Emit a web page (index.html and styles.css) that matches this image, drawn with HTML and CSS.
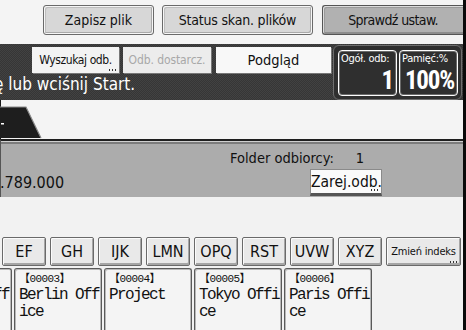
FILE: index.html
```html
<!DOCTYPE html>
<html lang="pl">
<head>
<meta charset="utf-8">
<title>Skaner</title>
<link rel="stylesheet" href="styles.css">
</head>
<body>
<div class="screen">
  <header class="topbar">
    <button class="btn btn-save">Zapisz plik</button>
    <button class="btn btn-status">Status skan. plików</button>
    <button class="btn btn-dark">Sprawdź ustaw.</button>
  </header>

  <section class="band">
    <div class="band-main">
      <div class="tabs">
        <div class="tab tab-search">Wyszukaj odb.<span class="more"></span></div>
        <div class="tab tab-disabled">Odb. dostarcz.</div>
        <div class="tab tab-preview">Podgląd</div>
      </div>
      <div class="msg">ę lub wciśnij Start.</div>
    </div>
    <div class="counters">
      <div class="counter"><span class="lbl">Ogół. odb:</span><span class="num">1</span></div>
      <div class="counter"><span class="lbl">Pamięć:%</span><span class="num">100%</span></div>
    </div>
  </section>

  <section class="tabstrip">
    <svg class="lefttab" width="44" height="33" viewBox="0 0 44 33">
      <polygon points="0,1 26,1 41,32 0,32" fill="#1e1e1e"/>
      <polyline points="0,1 26,1 41,32" fill="none" stroke="#8a8a8a" stroke-width="1.2"/>
      <rect x="1" y="17" width="3" height="1.5" fill="#ffffff"/>
    </svg>
  </section>

  <section class="info">
    <div class="info-row1"><span class="folder-lbl">Folder odbiorcy:</span><span class="folder-val">1</span></div>
    <div class="info-row2"><span class="addr">.789.000</span><button class="btn-white">Zarej.odb.<span class="more"></span></button></div>
  </section>

  <nav class="index">
    <button class="ix">EF</button>
    <button class="ix">GH</button>
    <button class="ix">IJK</button>
    <button class="ix">LMN</button>
    <button class="ix">OPQ</button>
    <button class="ix">RST</button>
    <button class="ix">UVW</button>
    <button class="ix">XYZ</button>
    <button class="ix ix-wide">Zmień indeks<span class="more"></span></button>
  </nav>

  <div class="cards">
    <div class="card card-partial"><span class="code">【00002】</span><span class="name">London Off<br>ice</span></div>
    <div class="card"><span class="code">【00003】</span><span class="name">Berlin Off<br>ice</span></div>
    <div class="card"><span class="code">【00004】</span><span class="name">Project</span></div>
    <div class="card"><span class="code">【00005】</span><span class="name">Tokyo Offi<br>ce</span></div>
    <div class="card"><span class="code">【00006】</span><span class="name">Paris Offi<br>ce</span></div>
  </div>
</div>
</body>
</html>
```

FILE: styles.css
```css
* { box-sizing: border-box; }
html, body { margin: 0; padding: 0; }
body {
  width: 466px;
  height: 330px;
  overflow: hidden;
  background: #f2f2f2;
  font-family: "DejaVu Sans Condensed", "DejaVu Sans", sans-serif;
  font-stretch: condensed;
  color: #111;
}
button { font: inherit; color: inherit; padding: 0; margin: 0; cursor: default; white-space: nowrap; }

.screen {
  width: 466px;
  height: 330px;
  border-right: 3px solid #0a0a0a;
  display: flex;
  flex-direction: column;
  overflow: hidden;
}

/* top bar */
.topbar {
  height: 44px;
  display: flex;
  align-items: flex-start;
  padding: 5px 0 0 43px;
  background: #f4f4f4;
}
.btn {
  height: 30px;
  border: 1px solid #6a6a6a;
  border-radius: 3px;
  background: #d7d7d7;
  box-shadow: inset 1px 1px 0 #f6f6f6, inset -1px -1px 0 #f6f6f6, inset 2px 2px 0 #bdbdbd, inset -2px -2px 0 #a9a9a9;
  font-size: 14px;
  line-height: 27px;
  text-align: center;
}
.btn-save { width: 111px; }
.btn-status { width: 151px; margin-left: 8px; letter-spacing: -0.2px; }
.btn-dark {
  width: 141px;
  margin-left: 9px;
  background: #b1b1b1;
  border-color: #555;
  border-radius: 3px 0 0 3px;
  border-right: none;
  letter-spacing: -0.6px;
  box-shadow: inset 1px 1px 0 #dcdcdc, inset 2px 2px 0 #9a9a9a, inset 0 -2px 0 #8d8d8d;
}

/* dark band */
.band {
  height: 56px;
  display: flex;
  background: repeating-conic-gradient(#363636 0 25%, #424242 0 50%) 0 0 / 2px 2px;
}
.band-main {
  width: 333px;
  display: flex;
  flex-direction: column;
}
.tabs {
  display: flex;
  align-items: flex-start;
  padding: 3px 0 0 32px;
  height: 29px;
}
.tab {
  position: relative;
  height: 26px;
  background: #f3f3f3;
  font-size: 12px;
  line-height: 26px;
  text-align: center;
  white-space: nowrap;
  box-shadow: 1px 1px 0 #777;
}
.tab-search { width: 87px; letter-spacing: -0.4px; }
.tab-disabled { width: 88px; margin-left: 4px; color: #a8a8a8; background: #ececec; letter-spacing: -0.1px; }
.tab-preview { width: 115px; margin-left: 5px; height: 26px; background: #f8f8f8; font-size: 14.5px; }
.more {
  position: absolute;
  right: 3px;
  bottom: 2px;
  width: 7px;
  height: 2px;
  background: repeating-linear-gradient(90deg, #333 0 1px, transparent 1px 3px);
}
.msg {
  color: #fff;
  font-size: 17px;
  line-height: 22px;
  white-space: nowrap;
  margin-left: -6px;
}

.counters {
  width: 129px;
  height: 55px;
  margin-top: 1px;
  background: #2f2f2f;
  border: 1px solid #6e6e6e;
  border-radius: 6px;
  display: flex;
  gap: 2px;
  padding: 4px 3px 3px 4px;
}
.counter {
  flex: 1;
  border: 1px solid #fdfdfd;
  border-radius: 4px;
  box-shadow: inset 0 0 0 1px #6a6a6a;
  display: flex;
  flex-direction: column;
  justify-content: space-between;
  padding: 1px 3px 1px 2px;
  color: #fff;
  overflow: hidden;
}
.lbl { font-size: 11px; line-height: 13px; white-space: nowrap; letter-spacing: -0.3px; }
.num {
  font-family: Roboto, "DejaVu Sans", sans-serif;
  font-size: 25px;
  line-height: 26px;
  font-weight: bold;
  text-align: right;
  letter-spacing: -1.2px;
}

/* strip with left tab */
.tabstrip {
  height: 45px;
  background: #f4f4f4;
  border-left: 1px solid #1a1a1a;
  display: flex;
  align-items: flex-end;
  padding-bottom: 6px;
}
.lefttab { display: block; margin-left: -1px; }

/* info panel */
.info {
  height: 58px;
  margin-top: -6px;
  background: #acacac;
  border-top: 2px solid #1e1e1e;
  box-shadow: inset 0 1px 0 #cfcfcf, inset 0 3px 0 #7c7c7c;
  border-left: 1px solid #555;
  padding-top: 7px;
  font-size: 15.5px;
}
.info-row1 { height: 20px; line-height: 20px; padding-left: 229px; display: flex; font-size: 14.5px; }
.folder-val { margin-left: 22px; }
.info-row2 { display: flex; align-items: center; height: 29px; }
.addr { width: 310px; margin-left: -1px; font-size: 16px; }
.btn-white {
  position: relative;
  width: 72px;
  height: 27px;
  background: #fafafa;
  border: 1px solid #8a8a8a;
  border-bottom: 3px solid #555;
  font-size: 15.5px;
  line-height: 22px;
}

/* index row */
.index {
  margin-top: 40px;
  height: 31px;
  display: flex;
  gap: 4px;
  padding-left: 2px;
}
.ix {
  position: relative;
  width: 44px;
  height: 29px;
  background: #e9e9e9;
  border: 1px solid #6a6a6a;
  border-radius: 2px;
  box-shadow: inset 1px 1px 0 #fbfbfb, inset -1px -2px 0 #a6a6a6;
  font-size: 16px;
  line-height: 26px;
  text-align: center;
}
.ix-wide { width: 75px; font-size: 11px; letter-spacing: -0.2px; }

/* cards */
.cards {
  display: flex;
  gap: 2px;
  margin-left: -76px;
}
.card {
  width: 88px;
  height: 62px;
  flex: none;
  border: 1px solid #5a5a5a;
  border-bottom: none;
  border-radius: 3px 3px 0 0;
  background: #f4f4f4;
  box-shadow: inset 1px 1px 0 #b8b8b8, inset -1px 0 0 #b8b8b8;
  padding: 3px 0 0 4px;
  display: flex;
  flex-direction: column;
  font-family: "Liberation Mono", "Noto Sans CJK JP", monospace;
}
.code { font-size: 11px; line-height: 14px; letter-spacing: -0.6px; }
.name { font-size: 16px; line-height: 17px; letter-spacing: -1.6px; margin-top: 1px; }
```
